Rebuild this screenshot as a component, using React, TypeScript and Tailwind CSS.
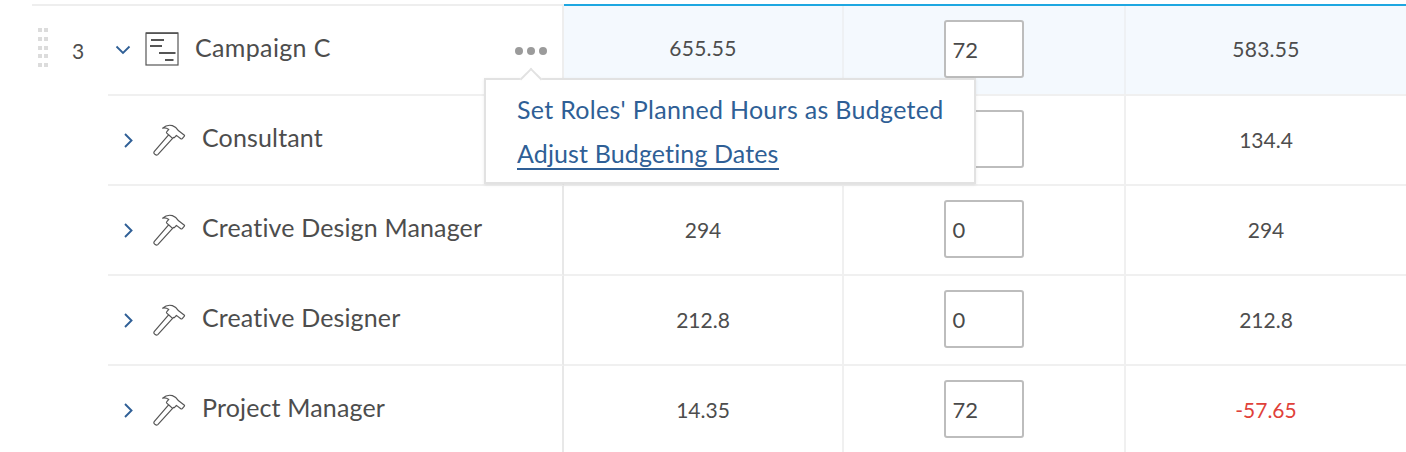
import { ReactNode } from 'react'

interface RoleRow {
  name: string
  budget: string
  hours?: string
  remaining: string
  negative?: boolean
}

const roles: RoleRow[] = [
  { name: 'Consultant', budget: '', hours: '', remaining: '134.4' },
  { name: 'Creative Design Manager', budget: '294', hours: '0', remaining: '294' },
  { name: 'Creative Designer', budget: '212.8', hours: '0', remaining: '212.8' },
  { name: 'Project Manager', budget: '14.35', hours: '72', remaining: '-57.65', negative: true },
]

function HammerIcon() {
  return (
    <svg width="34" height="34" viewBox="0 0 34 34" fill="none" stroke="#555" strokeWidth="1.2" strokeLinejoin="round" className="shrink-0">
      <path d="M2.2 28.6 L16.6 11.8 L20.6 15.4 L5.8 31.6 Q4.6 32.6 3.2 31.6 L2 30.4 Q1.6 29.4 2.2 28.6 Z" />
      <path d="M16.6 11.8 L14.6 9.8 Q14.2 9.2 14.8 8.6 L16.8 6.4 Q13.8 4.4 10.6 5.2 Q15 1.2 20.4 2.6 Q24 3.8 26.6 7.8 L32.4 12.2 Q32.8 12.8 32.2 13.4 L30 15.8 Q29.4 16.2 28.8 15.8 L24.4 12.4 L22.6 14.4 Q22 14.8 21.6 14.4 L20.6 15.4" />
    </svg>
  )
}

function GanttIcon() {
  return (
    <svg width="34" height="34" viewBox="0 0 34 34" fill="none" className="shrink-0">
      <rect x="1" y="1" width="32" height="32" fill="none" stroke="#555" strokeWidth="1.2" />
      <path d="M1 1.2 H33" stroke="#555" strokeWidth="1.6" />
      <path d="M6 8 H19 M5 14 H17 M14 21 H30.5 M20 28 H28.5" stroke="#555" strokeWidth="2" />
    </svg>
  )
}

function Chevron({ open }: { open?: boolean }) {
  return open ? (
    <svg width="16" height="10" viewBox="0 0 16 10" fill="none" stroke="#2f5f96" strokeWidth="1.8" className="shrink-0">
      <path d="M1.5 1.5 L8 8 L14.5 1.5" />
    </svg>
  ) : (
    <svg width="9" height="15" viewBox="0 0 9 15" fill="none" stroke="#2f5f96" strokeWidth="1.9" className="shrink-0">
      <path d="M1 1 L7.5 7.5 L1 14" />
    </svg>
  )
}

function HoursInput({ value }: { value?: string }) {
  return (
    <div className="-ml-[1px] mb-[2px] flex h-[58px] w-[80px] items-center rounded-[3px] border-2 border-[#bdbdbd] bg-white pl-[7px] text-[22px] text-[#4a4a4a]">
      {value}
    </div>
  )
}

function Cell({ children, className = '' }: { children?: ReactNode; className?: string }) {
  return <div className={`flex items-center justify-center ${className}`}>{children}</div>
}

const valueText = 'text-[21px]'

export default function App() {
  return (
    <div className="relative h-[452px] w-[1406px] overflow-hidden bg-white font-['Lato',sans-serif] text-[#4d4d4d]">
      <div className="h-[4px]" />

      {/* top campaign row */}
      <div className="ml-[32px] grid h-[92px] grid-cols-[532px_1fr]">
        <div className="flex border-t-2 border-r-2 border-[#eeeeee]">
          <div className="ml-[6px] mt-[22px] grid h-[40px] w-[10px] grid-cols-2 gap-x-[2px] gap-y-[4px]">
            {Array.from({ length: 10 }).map((_, i) => (
              <span key={i} className="h-[4px] w-[4px] bg-[#dcdcdc]" />
            ))}
          </div>
          <div className="ml-[60px] flex flex-1 items-center border-b-2 border-[#f0f0f0] pb-[2px]">
            <span className="absolute left-[72px] top-[38px] text-[21px] leading-[25px]">3</span>
            <div className="ml-[7px] mt-[2px]"><Chevron open /></div>
            <div className="ml-[14px]"><GanttIcon /></div>
            <span className="mb-[4px] ml-[16px] text-[25px] leading-[30px] tracking-[0.35px]">Campaign C</span>
            <div className="ml-auto mr-[15px] mt-[4px] flex gap-[4px]">
              <span className="h-[8px] w-[8px] rounded-full bg-[#9b9b9b]" />
              <span className="h-[8px] w-[8px] rounded-full bg-[#9b9b9b]" />
              <span className="h-[8px] w-[8px] rounded-full bg-[#9b9b9b]" />
            </div>
          </div>
        </div>
        <div className="grid grid-cols-[280px_282px_1fr] border-y-2 border-t-[#1ea7e1] border-b-[#f0f0f0] bg-[#f4f9fe]">
          <Cell className={`border-r-2 border-[#eef1f4] pb-[4px] ${valueText} tracking-[0.3px]`}>655.55</Cell>
          <Cell className="border-r-2 border-[#eef1f4]"><HoursInput value="72" /></Cell>
          <Cell className={`pb-[2px] ${valueText} tracking-[0.3px]`}>583.55</Cell>
        </div>
      </div>

      {/* role rows */}
      {roles.map((r, i) => {
        const rule = i < roles.length - 1 ? 'border-b-2 border-b-[#f0f0f0]' : 'border-b-2 border-b-transparent'
        return (
          <div key={r.name} className="ml-[108px] grid h-[90px] grid-cols-[456px_280px_282px_1fr]">
            <div className={`flex items-center border-r-2 border-r-[#e8e8e8] pl-[16px] ${rule}`}>
              <Chevron />
              <div className="ml-[19px]"><HammerIcon /></div>
              <span className="mb-[6px] ml-[16px] text-[25px] leading-[30px] tracking-[0.15px]">{r.name}</span>
            </div>
            <Cell className={`border-r-2 border-r-[#f0f0f0] ${valueText} ${rule}`}>{r.budget}</Cell>
            <Cell className={`border-r-2 border-r-[#f0f0f0] ${rule}`}>
              <HoursInput value={r.hours} />
            </Cell>
            <Cell className={`${valueText} ${r.negative ? 'text-[#e0413a]' : ''} ${rule}`}>{r.remaining}</Cell>
          </div>
        )
      })}

      {/* actions menu */}
      <div className="absolute left-[484px] top-[78px] h-[106px] w-[492px] border-2 border-[#e2e2e2] bg-white pl-[31px] pt-[14px] text-[25px] leading-[30px] text-[#2f5f96] shadow-[0_1px_3px_rgba(0,0,0,0.08)]">
        <span className="absolute left-[37px] -top-[9px] h-[16px] w-[16px] rotate-45 border-l-2 border-t-2 border-[#e2e2e2] bg-white" />
        <div className="tracking-[0.3px]">Set Roles' Planned Hours as Budgeted</div>
        <div className="mt-[14px] w-fit border-b-2 border-[#2f5f96] tracking-[0.13px]">Adjust Budgeting Dates</div>
      </div>
    </div>
  )
}
